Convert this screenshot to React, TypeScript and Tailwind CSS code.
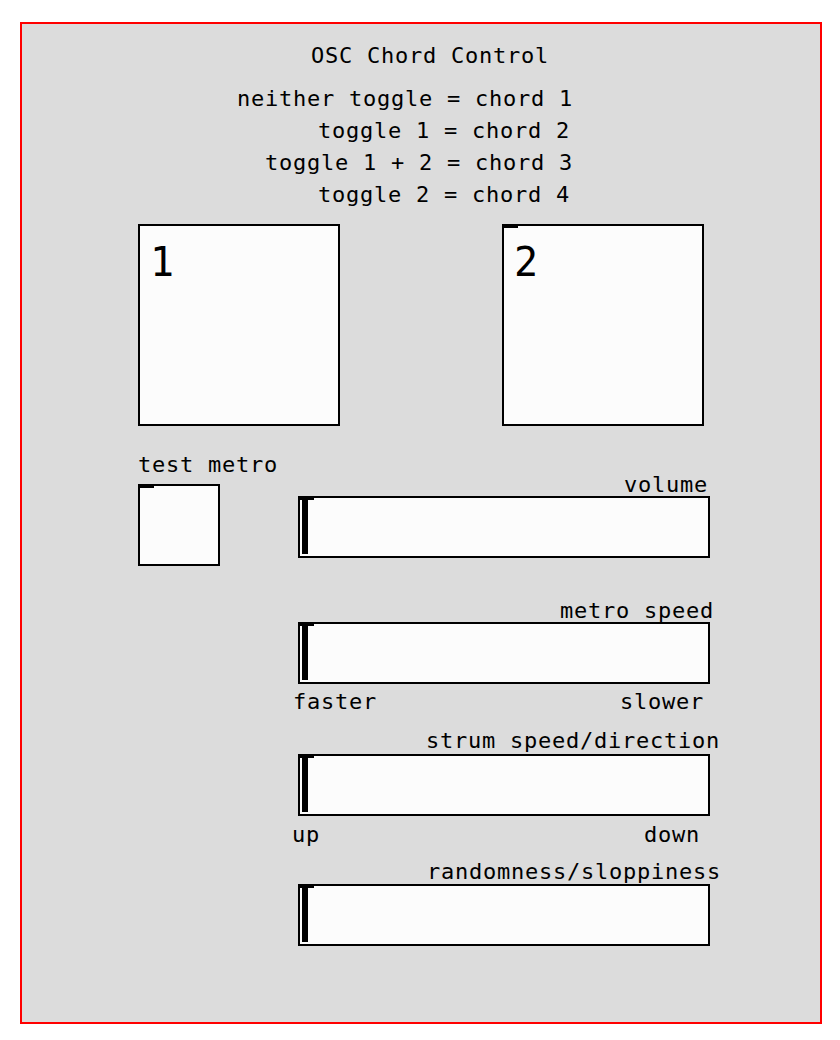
const mono = "font-['DejaVu_Sans_Mono',monospace] text-[22px] tracking-[0.76px] text-black";

const Inlet = () => <div className="absolute left-0 top-0 h-[2px] w-[14px] bg-black" />;

const Toggle = ({ label, inlet }: { label: string; inlet?: boolean }) => (
  <div className="relative h-[202px] w-[202px] border-2 border-black bg-[#fcfcfc]">
    {inlet && <Inlet />}
    <div className="pl-[10px] pt-[16px] font-['DejaVu_Sans_Mono',monospace] text-[40px] leading-[40px] text-black">
      {label}
    </div>
  </div>
);

const Slider = () => (
  <div className="relative ml-[8px] h-[62px] w-[412px] border-2 border-black bg-[#fcfcfc]">
    <Inlet />
    <div className="absolute bottom-[2px] left-[2px] top-[2px] w-[6px] bg-black" />
  </div>
);

const Label = ({ text, className }: { text: string; className?: string }) => (
  <div className={`${mono} h-[20px] whitespace-pre leading-[20px] ${className ?? ""}`}>{text}</div>
);

export default function App() {
  const legend = [
    { text: "neither toggle = chord 1", cls: "" },
    { text: "      toggle 1 = chord 2", cls: "-ml-[3px]" },
    { text: "  toggle 1 + 2 = chord 3", cls: "" },
    { text: "      toggle 2 = chord 4", cls: "-ml-[3px]" },
  ];

  return (
    <div className="min-h-[1040px] w-[840px] bg-white pt-[22px]">
      <div className="ml-[20px] flex h-[1002px] w-[802px] flex-col border-2 border-[#ff0000] bg-[#dcdcdc]">
        {/* title */}
        <Label text="OSC Chord Control" className="ml-[289px] mt-[22px]" />

        {/* legend */}
        <div className={`${mono} ml-[215px] mt-[17px] whitespace-pre leading-[32px]`}>
          {legend.map((line) => (
            <div key={line.text} className={line.cls}>
              {line.text}
            </div>
          ))}
        </div>

        {/* chord toggles */}
        <div className="ml-[116px] mt-[13px] flex gap-[162px]">
          <Toggle label="1" />
          <Toggle label="2" inlet />
        </div>

        {/* metro + sliders */}
        <div className="mt-[29px] flex">
          <div className="ml-[116px] flex w-[152px] flex-col">
            <Label text="test metro" />
            <div className="relative mt-[9px] h-[82px] w-[82px] border-2 border-black bg-[#fcfcfc]">
              <Inlet />
            </div>
          </div>

          <div className="flex flex-col pt-[20px]">
            <Label text="volume" className="ml-[334px]" />
            <div className="mt-[1px]">
              <Slider />
            </div>

            <Label text="metro speed" className="ml-[270px] mt-[43px]" />
            <div className="mt-[1px]">
              <Slider />
            </div>
            <div className="mt-[8px] flex">
              <Label text="faster" className="ml-[3px]" />
              <Label text="slower" className="ml-[243px]" />
            </div>

            <Label text="strum speed/direction" className="ml-[136px] mt-[19px]" />
            <div className="mt-[3px]">
              <Slider />
            </div>
            <div className="mt-[9px] flex">
              <Label text="up" className="ml-[2px]" />
              <Label text="down" className="ml-[324px]" />
            </div>

            <Label text="randomness/sloppiness" className="ml-[137px] mt-[17px]" />
            <div className="mt-[2px]">
              <Slider />
            </div>
          </div>
        </div>
      </div>
    </div>
  );
}
